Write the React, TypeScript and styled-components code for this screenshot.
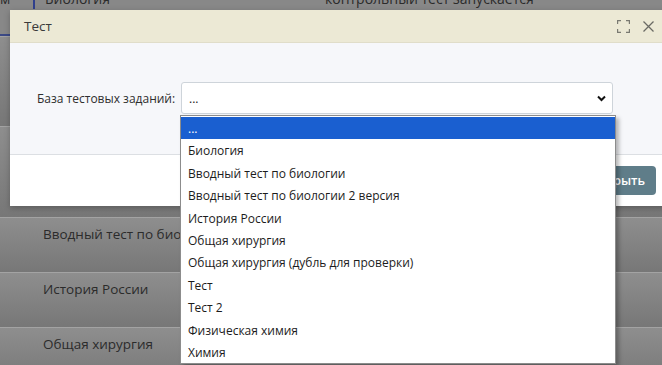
import React from 'react';
import styled, { createGlobalStyle } from 'styled-components';

const GlobalStyle = createGlobalStyle`
  html, body {
    margin: 0;
    padding: 0;
    overflow: hidden;
    background: #7c7c7c;
    font-family: "Open Sans", "Noto Sans", sans-serif;
  }
`;

const items = [
  '...',
  'Биология',
  'Вводный тест по биологии',
  'Вводный тест по биологии 2 версия',
  'История России',
  'Общая хирургия',
  'Общая хирургия (дубль для проверки)',
  'Тест',
  'Тест 2',
  'Физическая химия',
  'Химия',
];

const App = () => {
  return (
    <Screen>
      <GlobalStyle />
      <Page>
        <TopRow>
          <TopCell $w={33}>м</TopCell>
          <TopCell $w={292} $bar>Биология</TopCell>
          <TopCell>контрольный тест запускается</TopCell>
        </TopRow>
        <Row $h={90} />
        <Row $h={91} />
        <Row $h={55}>Вводный тест по биологии</Row>
        <Row $h={55}>История России</Row>
        <Row $h={55}>Общая хирургия</Row>
      </Page>

      <Modal>
        <ModalHeader>
          <Title>Тест</Title>
          <HeaderIcons>
            <IconBtn>
              <svg width="13" height="13" viewBox="0 0 13 13" fill="none" stroke="#7a7a72" strokeWidth="1.2">
                <path d="M0.6 4V0.6H4M9 0.6H12.4V4M12.4 9V12.4H9M4 12.4H0.6V9" />
              </svg>
            </IconBtn>
            <IconBtn>
              <svg width="11" height="11" viewBox="0 0 11 11" fill="none" stroke="#6a6a64" strokeWidth="1.3">
                <path d="M0.5 0.5L10.5 10.5M10.5 0.5L0.5 10.5" />
              </svg>
            </IconBtn>
          </HeaderIcons>
        </ModalHeader>
        <ModalBody>
          <Field>
            <Label>База тестовых заданий:</Label>
            <SelectBox>
              <span>...</span>
              <svg width="9" height="7" viewBox="0 0 9 7" fill="none" stroke="#111" strokeWidth="2">
                <path d="M1 1.5L4.5 5L8 1.5" />
              </svg>
              <Dropdown>
                {items.map((it, i) => (
                  <Option key={it} $active={i === 0}>{it}</Option>
                ))}
              </Dropdown>
            </SelectBox>
          </Field>
        </ModalBody>
        <ModalFooter>
          <CloseButton>Закрыть</CloseButton>
        </ModalFooter>
      </Modal>
    </Screen>
  );
};

export default App;

const Screen = styled.div`
  position: relative;
  width: 662px;
  height: 365px;
  overflow: hidden;
`;

const Page = styled.div`
  display: flex;
  flex-direction: column;
  margin-top: -11px;
  color: #2b2b2b;
  font-size: 13.5px;
`;

const TopRow = styled.div`
  display: flex;
  height: 47px;
  background: #888888;
  border-bottom: 2px solid #3c4a86;
  box-sizing: border-box;
  line-height: 20px;
`;

const TopCell = styled.div<{ $w?: number; $bar?: boolean }>`
  width: ${p => (p.$w ? `${p.$w}px` : 'auto')};
  padding-left: ${p => (p.$bar ? '10px' : '0')};
  border-left: ${p => (p.$bar ? '2px solid #2f3f8c' : 'none')};
  box-sizing: border-box;
  height: 20px;
  font-size: 14px;
  white-space: nowrap;
`;

const Row = styled.div<{ $h: number }>`
  display: flex;
  align-items: flex-start;
  height: ${p => p.$h}px;
  box-sizing: border-box;
  padding: 6px 0 0 43px;
  line-height: 20px;
  background: linear-gradient(#8e8e8e, #777777);
  border-top: 1px solid #a3a3a3;
`;

const Modal = styled.div`
  position: absolute;
  top: 10px;
  left: 10px;
  width: 658px;
  display: flex;
  flex-direction: column;
  background: #fff;
  box-shadow: 0 2px 6px rgba(0, 0, 0, 0.25);
`;

const ModalHeader = styled.div`
  display: flex;
  align-items: center;
  justify-content: space-between;
  height: 33px;
  padding: 0 14px;
  box-sizing: border-box;
  background: #ece9d5;
  border-bottom: 1px solid #e0ddc9;
`;

const Title = styled.div`
  font-size: 13.5px;
  color: #3a3a3a;
`;

const HeaderIcons = styled.div`
  display: flex;
  align-items: center;
  gap: 13px;
  margin-right: 0;
`;

const IconBtn = styled.div`
  display: flex;
  align-items: center;
`;

const ModalBody = styled.div`
  height: 112px;
  box-sizing: border-box;
  padding: 39px 0 0 27px;
  background: #f6f7fa;
  border-bottom: 1px solid #dcdfe3;
`;

const Field = styled.div`
  display: flex;
  align-items: center;
  gap: 5px;
`;

const Label = styled.label`
  flex: 0 0 139px;
  font-size: 12px;
  color: #2e2e2e;
  white-space: nowrap;
`;

const SelectBox = styled.div`
  position: relative;
  display: flex;
  align-items: center;
  justify-content: space-between;
  width: 432px;
  height: 32px;
  box-sizing: border-box;
  padding: 0 6px 0 7px;
  background: #fff;
  border: 1px solid #ced4da;
  border-radius: 3px;
  font-size: 12px;
  color: #222;
`;

const Dropdown = styled.div`
  position: absolute;
  top: 32px;
  left: -2px;
  width: 434px;
  display: flex;
  flex-direction: column;
  padding-top: 1px;
  background: #fff;
  border: 1px solid #8c8c8c;
  box-shadow: 3px 3px 4px rgba(0, 0, 0, 0.28);
  z-index: 2;
`;

const Option = styled.div<{ $active?: boolean }>`
  height: 22.4px;
  line-height: 23.4px;
  padding-left: 7px;
  font-size: 12px;
  white-space: nowrap;
  color: ${p => (p.$active ? '#fff' : '#1c1c1c')};
  background: ${p => (p.$active ? '#1a5fd0' : 'transparent')};
`;

const ModalFooter = styled.div`
  display: flex;
  justify-content: flex-end;
  align-items: center;
  height: 51px;
  padding: 0 12px;
  background: #fff;
`;

const CloseButton = styled.button`
  height: 29px;
  padding: 0 11px;
  border: none;
  border-radius: 4px;
  background: #5f7d89;
  color: #fff;
  font-family: inherit;
  font-size: 12.5px;
  font-weight: 600;
`;
